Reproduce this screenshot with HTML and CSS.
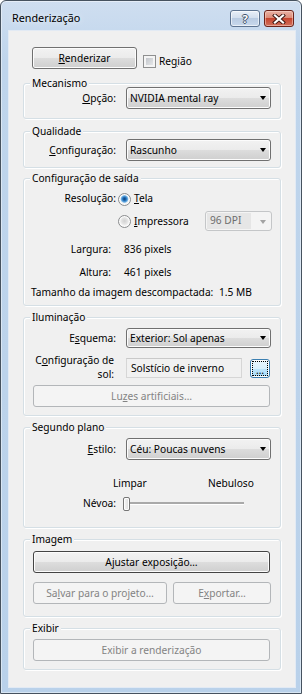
FILE: index.html
```html
<!DOCTYPE html>
<html lang="pt">
<head>
  <meta charset="UTF-8" />
  <title>Renderização</title>
  <link rel="stylesheet" href="styles.css">
</head>
<body>
  <div class="window">
    <div class="titlebar">
      <span class="title">Renderização</span>
      <div class="caption">
        <span class="cap-btn cap-help">?</span>
        <span class="cap-btn cap-close">
          <svg width="14" height="10" viewBox="0 0 14 10">
            <path d="M3 1.5 L11 8.5 M11 1.5 L3 8.5" stroke="#3b1510" stroke-width="4" stroke-linecap="square" fill="none"/>
            <path d="M3 1.5 L11 8.5 M11 1.5 L3 8.5" stroke="#fff" stroke-width="2.2" stroke-linecap="square" fill="none"/>
          </svg>
        </span>
      </div>
    </div>

    <div class="client">
      <div class="top-row">
        <button class="btn btn-render"><u>R</u>enderizar</button>
        <label class="check"><span class="checkbox"></span><span>Re<u>g</u>ião</span></label>
      </div>

      <div class="group g-engine">
        <div class="legend">Mecanismo</div>
        <div class="row">
          <span class="lbl"><u>O</u>pção:</span>
          <div class="combo"><span>NVIDIA mental ray</span><i class="arrow"></i></div>
        </div>
      </div>

      <div class="group g-quality">
        <div class="legend">Qualidade</div>
        <div class="row">
          <span class="lbl"><u>C</u>onfiguração:</span>
          <div class="combo"><span>Rascunho</span><i class="arrow"></i></div>
        </div>
      </div>

      <div class="group g-output">
        <div class="legend">Configuração de saída</div>
        <div class="row res-row">
          <span class="lbl lbl-plain">Resolução:</span>
          <span class="radio checked"></span>
          <span class="radio-text"><u>T</u>ela</span>
        </div>
        <div class="row printer-row">
          <span class="radio"></span>
          <span class="radio-text"><u>I</u>mpressora</span>
          <div class="combo combo-off"><span class="combo-val">96 DPI</span><i class="arrow"></i></div>
        </div>
        <div class="row info-row info-width">
          <span class="lbl-info">Largura:</span><span class="info-val">836 pixels</span>
        </div>
        <div class="row info-row info-height">
          <span class="lbl-info">Altura:</span><span class="info-val">461 pixels</span>
        </div>
        <div class="row info-row info-size">
          <span class="size-lbl">Tamanho da imagem descompactada:</span><span>1.5 MB</span>
        </div>
      </div>

      <div class="group g-light">
        <div class="legend">Iluminação</div>
        <div class="row scheme-row">
          <span class="lbl lbl-sm">E<u>s</u>quema:</span>
          <div class="combo combo-sm"><span>Exterior: Sol apenas</span><i class="arrow"></i></div>
        </div>
        <div class="row sun-row">
          <span class="lbl lbl-two">C<u>o</u>nfiguração de<br>sol:</span>
          <div class="text-field">Solstício de inverno</div>
          <button class="btn btn-dots"><span class="focus-ring">…</span></button>
        </div>
        <button class="btn btn-wide btn-lights" disabled>Lu<u>z</u>es artificiais…</button>
      </div>

      <div class="group g-bg">
        <div class="legend">Segundo plano</div>
        <div class="row">
          <span class="lbl"><u>E</u>stilo:</span>
          <div class="combo"><span>Céu: Poucas nuvens</span><i class="arrow"></i></div>
        </div>
        <div class="row fog-labels">
          <span class="fog-min">Limpar</span><span>Nebuloso</span>
        </div>
        <div class="row fog-row">
          <span class="lbl lbl-plain">Névoa:</span>
          <div class="slider">
            <span class="thumb"></span>
            <span class="track"></span>
          </div>
        </div>
      </div>

      <div class="group g-image">
        <div class="legend">Imagem</div>
        <button class="btn btn-wide btn-default">A<u>j</u>ustar exposição…</button>
        <div class="row save-row">
          <button class="btn btn-save" disabled>Sa<u>l</u>var para o projeto…</button>
          <button class="btn btn-export" disabled>E<u>x</u>portar…</button>
        </div>
      </div>

      <div class="group g-show">
        <div class="legend">Exibir</div>
        <button class="btn btn-wide btn-show" disabled>Exibir a renderização</button>
      </div>
    </div>
  </div>
</body>
</html>
```

FILE: styles.css
```css
* {
  box-sizing: border-box;
}

body {
  margin: 0;
  background: #fff;
  font-family: "Noto Sans", "Open Sans", sans-serif;
  font-size: 10.2px;
  color: #000;
}

u {
  text-underline-offset: 1px;
}

/* window frame */
.window {
  width: 302px;
  height: 694px;
  border: 1px solid #46525f;
  border-radius: 6px 6px 0 0;
  background: linear-gradient(#cfdef0, #bfd5ec 60px, #b9d1ea);
  box-shadow: inset 0 0 0 1px rgba(255, 255, 255, 0.45), 0 2px 0 #35a2cb;
}

.titlebar {
  display: flex;
  justify-content: space-between;
  height: 29px;
  padding: 0 7px 0 11px;
}

.title {
  margin-top: 10px;
  font-size: 10.8px;
  line-height: 14px;
  text-shadow: 0 0 6px rgba(255, 255, 255, 0.9);
}

.caption {
  display: flex;
  gap: 4px;
  margin-top: 9px;
}

.cap-btn {
  display: flex;
  align-items: center;
  justify-content: center;
  width: 30px;
  height: 17px;
  border-radius: 3px;
}

.cap-help {
  border: 1px solid #5d7390;
  background: linear-gradient(#e8eff8, #d3dfee 45%, #b9cbe2 50%, #c9d9ec);
  box-shadow: inset 0 0 0 1px rgba(255, 255, 255, 0.6);
  color: #fff;
  font-weight: bold;
  font-size: 11px;
  line-height: 15px;
  text-shadow: 1px 0 0 #3d5068, -1px 0 0 #3d5068, 0 1px 0 #3d5068, 0 -1px 0 #3d5068;
}

.cap-close {
  border: 1px solid #6b231a;
  background: linear-gradient(#eab3a6, #dc8b78 45%, #c7452f 50%, #d0705c);
  box-shadow: inset 0 0 0 1px rgba(255, 220, 210, 0.5);
}

/* client area */
.client {
  width: 288px;
  height: 658px;
  margin-left: 7px;
  border: 1px solid #e2eaf4;
  background: #f0f0f0;
  padding: 0 14px;
}

.top-row {
  display: flex;
  align-items: flex-start;
  margin: 16px 0 0 9px;
}

.btn {
  display: block;
  height: 22px;
  padding: 0;
  border: 1px solid #707070;
  border-radius: 3px;
  background: linear-gradient(#f2f2f2, #ebebeb 50%, #dddddd 50%, #cfcfcf);
  box-shadow: inset 0 0 0 1px #fcfcfc;
  font: inherit;
  line-height: 20px;
  color: #000;
  text-align: center;
}

.btn:disabled {
  border-color: #b3b6b9;
  background: #f4f4f4;
  box-shadow: none;
  color: #838383;
}

.btn-render {
  width: 105px;
}

.check {
  display: flex;
  align-items: flex-start;
  gap: 3px;
  margin: 8px 0 0 6px;
  line-height: 13px;
}

.checkbox {
  width: 13px;
  height: 13px;
  border: 1px solid #8e8f8f;
  background: linear-gradient(135deg, #b9bdc3, #eeeff0);
  box-shadow: inset 0 0 0 2px #f4f4f4;
}

/* group boxes */
.group {
  border: 1px solid #d5dfe5;
  border-radius: 3px;
  box-shadow: inset 1px 1px #fff, 1px 1px #fff;
}

.legend {
  display: table;
  margin: -8px 0 0 6px;
  padding: 0 2px;
  background: #f0f0f0;
  line-height: 14px;
}

.row {
  display: flex;
  align-items: flex-start;
}

.lbl {
  width: 92px;
  flex: none;
  padding-top: 2px;
  line-height: 18px;
  text-align: right;
}

.lbl-sm {
  padding-top: 1px;
}

.lbl-plain {
  padding-top: 0;
  line-height: 16px;
}

.combo {
  display: flex;
  width: 145px;
  height: 22px;
  margin-left: 10px;
  padding: 1px 0 0 3px;
  border: 1px solid #707070;
  border-radius: 3px;
  background: linear-gradient(#f2f2f2, #ebebeb 50%, #dddddd 50%, #cfcfcf);
  box-shadow: inset 0 0 0 1px #fcfcfc;
  line-height: 18px;
  white-space: nowrap;
}

.combo-sm {
  height: 20px;
  padding-top: 0;
}

.arrow {
  width: 0;
  height: 0;
  margin: 7px 4px 0 auto;
  border-left: 3.5px solid transparent;
  border-right: 3.5px solid transparent;
  border-top: 4px solid #000;
}

.combo-sm .arrow {
  margin-top: 7px;
}

.g-engine {
  margin-top: 14px;
}

.g-engine .row {
  margin: -3px 0 9px;
}

.g-quality {
  margin-top: 12px;
}

.g-quality .row {
  margin: 1px 0 6px;
}

/* output settings */
.g-output {
  margin-top: 10px;
}

.radio {
  width: 13px;
  height: 13px;
  flex: none;
  border: 1px solid #8a8c8e;
  border-radius: 50%;
  background: radial-gradient(circle at 50% 45%, #d0d0d0 0, #e4e4e4 3px, #f7f7f7 5px);
  box-shadow: inset 0 0 0 1px #fbfbfb;
}

.radio.checked {
  background: radial-gradient(circle at 50% 45%, #0b3f7c 0, #1d66ad 1.5px, #5fa7e0 3px, #97c6ec 3.6px, #f4f4f4 4.2px);
}

.radio-text {
  margin-left: 3px;
}

.res-row {
  margin-top: 5px;
  height: 16px;
  line-height: 16px;
}

.res-row .radio {
  margin: 3px 0 0 2px;
}

.printer-row {
  margin-top: 5px;
  height: 20px;
  padding-left: 94px;
  line-height: 20px;
}

.printer-row .radio {
  margin-top: 4px;
}

.combo-off {
  width: 67px;
  height: 20px;
  margin: 0 8px 0 auto;
  padding: 1px;
  border-color: #c4c6c8;
  background: #f4f4f4;
  box-shadow: none;
  color: #6d6d6d;
}

.combo-val {
  width: 44px;
  height: 16px;
  padding-left: 3px;
  background: #e6e6e6;
  line-height: 15px;
}

.combo-off .arrow {
  margin-top: 7px;
  border-top-color: #a3a3a3;
}

.info-row {
  height: 16px;
  line-height: 16px;
}

.lbl-info {
  width: 87px;
  text-align: right;
}

.info-val {
  margin-left: 13px;
}

.info-width {
  margin-top: 10px;
}

.info-height {
  margin-top: 7px;
}

.info-size {
  margin: 4px 0 5px;
  padding-left: 7px;
}

.size-lbl {
  width: 188px;
  flex: none;
}

/* lighting */
.g-light {
  margin-top: 11px;
}

.scheme-row {
  margin-top: 4px;
}

.sun-row {
  margin-top: 10px;
  height: 20px;
}

.lbl-two {
  margin-top: -5px;
  padding: 0 2px 0 0;
  line-height: 14px;
}

.text-field {
  width: 116px;
  height: 20px;
  margin-left: 10px;
  padding-left: 4px;
  border: 1px solid #d6d6d6;
  border-top-color: #c9c9c9;
  background: #f1f1f1;
  line-height: 18px;
}

.btn-dots {
  width: 20px;
  height: 19px;
  margin: 1px 0 0 8px;
  border-color: #3c7fb1;
  background: linear-gradient(#eaf6fd, #d9f0fc 50%, #bee6fd 50%, #a7d9f5);
}

.focus-ring {
  display: block;
  height: 15px;
  margin: 0 1px;
  border: 1px dotted #000;
  line-height: 16px;
}

.btn-wide {
  width: 237px;
  margin: 0 9px;
}

.btn-lights {
  margin: 7px 9px 8px;
}

/* background */
.g-bg {
  margin-top: 11px;
}

.g-bg .row:nth-child(2) {
  margin-top: 4px;
}

.fog-labels {
  margin-top: 15px;
  height: 16px;
  padding-left: 89px;
  line-height: 16px;
}

.fog-min {
  width: 95px;
}

.fog-row {
  margin: 4px 0 16px;
  height: 16px;
}

.slider {
  display: flex;
  align-items: flex-start;
  margin-left: 7px;
}

.thumb {
  width: 7px;
  height: 14px;
  margin-top: 2px;
  border: 1px solid #767676;
  border-radius: 2px;
  background: linear-gradient(90deg, #f7f7f7, #dadada);
  box-shadow: inset 0 0 0 1px #fdfdfd;
}

.track {
  width: 114px;
  height: 3px;
  margin: 7px 0 0 0;
  background: linear-gradient(#a9a9a9 0 2px, #fff 2px);
}

/* image */
.g-image {
  margin-top: 11px;
}

.btn-default {
  margin-top: 5px;
  border-color: #444;
}

.save-row {
  gap: 6px;
  margin: 9px 9px 12px;
}

.btn-save {
  width: 134px;
}

.btn-export {
  flex: 1;
}

/* show */
.g-show {
  margin-top: 11px;
}

.btn-show {
  margin: 4px 9px 8px;
}
```
